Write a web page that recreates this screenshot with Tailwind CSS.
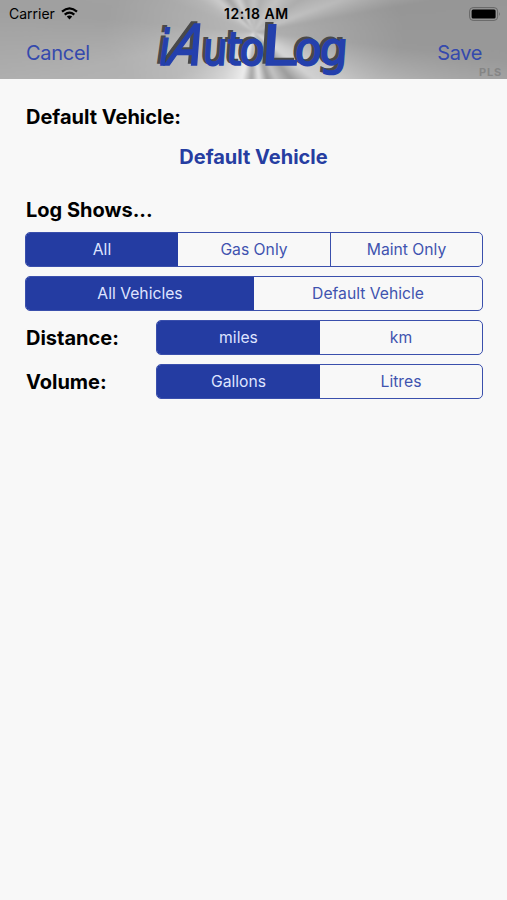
<!DOCTYPE html>
<html lang="en">
<head>
<meta charset="utf-8">
<title>iAutoLog</title>
<script src="https://cdn.jsdelivr.net/npm/@tailwindcss/browser@4"></script>
</head>
<body class="h-[900px] w-[507px] overflow-hidden bg-[#f8f8f8] font-['Inter','Liberation_Sans',sans-serif] text-black">
<header class="relative h-[79px] overflow-hidden bg-[#a3a3a3]">
  <div class="absolute -inset-[3px] bg-[radial-gradient(ellipse_150px_80px_at_257px_35px,#ffffff40,#ffffff00),conic-gradient(from_0deg_at_257px_35px,#b5b5b5_0deg,#a0a0a0_12deg,#b8b8b8_35deg,#a0a0a0_55deg,#b4b4b4_70deg,#969696_80deg,#999_96deg,#aaa_105deg,#c4c4c4_118deg,#cdcdcd_128deg,#909090_142deg,#bbb_155deg,#909090_164deg,#e2e2e2_174deg,#999_183deg,#eaeaea_194deg,#cfcfcf_215deg,#b5b5b5_240deg,#b0b0b0_258deg,#a0a0a0_275deg,#a2a2a2_290deg,#ababab_300deg,#c4c4c4_312deg,#939393_322deg,#c9c9c9_334deg,#a0a0a0_345deg,#b5b5b5_360deg)] blur-[1px]"></div>
  <svg class="absolute inset-0" width="507" height="79" font-family="'DejaVu Sans'">
    <defs>
      <g id="logo" font-size="46" stroke-width="1.6">
        <text transform="translate(157 65) skewX(-8) scale(.8 1)" font-size="49">i</text>
        <text transform="translate(164 65) skewX(-22) scale(.86 1)" font-size="56">A</text>
        <text transform="translate(202 65) skewX(-4) scale(.84 1)">u</text>
        <text transform="translate(226 65) skewX(-4) scale(.84 1)">t</text>
        <text transform="translate(239 65) skewX(-4) scale(.88 1)">o</text>
        <text transform="translate(260 65) skewX(-4) scale(1.18 1)" font-size="55">L</text>
        <text transform="translate(294 65) skewX(-4) scale(.96 1)">o</text>
        <text transform="translate(319 65) skewX(-4) scale(.96 1)">g</text>
      </g>
    </defs>
    <use href="#logo" x="-3" y="-2" fill="#494949" stroke="#494949"/>
    <use href="#logo" fill="#2440ad" stroke="#2440ad"/>
  </svg>
  <div class="relative flex h-[27px] items-center justify-between pr-[6px] pl-[9px]">
    <div class="flex items-center gap-[6px]"><span class="text-[14px] leading-[27px]">Carrier</span>
      <svg width="17" height="13" viewBox="0 0 17 13" fill="none" stroke="#000" stroke-width="2.2"><path d="M1 4.7Q8.500 -1.800 16 4.700M3.700 7.700Q8.500 3.500 13.300 7.700"/><path d="M5.800 9.600Q8.500 7.300 11.200 9.600L8.500 12.400Z" fill="#000" stroke="none"/></svg>
    </div>
    <span class="absolute left-[224px] text-[14px] font-semibold tracking-[.5px] whitespace-nowrap">12:18 AM</span>
    <svg width="32" height="14" viewBox="0 0 32 14"><rect x=".6" y=".6" width="28" height="12.800" rx="3.500" fill="none" stroke="#666"/><rect x="2.600" y="2.600" width="24" height="8.800" rx="1.500"/><path d="M30 5q1.800 2 0 4z" fill="#666"/></svg>
  </div>
  <div class="relative flex h-[51px] items-center justify-between px-[25px] text-[20px] text-[#3449ad]"><span class="pl-[1px] tracking-[-.3px]">Cancel</span><span class="tracking-[-.4px]">Save</span></div>
  <span class="absolute right-[5px] bottom-0 text-[11px] leading-[13px] font-bold tracking-[.8px] text-[#858585]">PLS</span>
</header>
<main class="px-[25px] text-[20px] font-bold">
  <h2 class="mt-[23px] h-[30px] pl-[1px] leading-[30px]">Default Vehicle:</h2>
  <div class="mt-[10px] h-[30px] text-center leading-[30px] text-[#263da1]">Default Vehicle</div>
  <h2 class="mt-[23px] h-[30px] pl-[1px] leading-[30px]">Log Shows...</h2>
  <div class="mt-[7px] flex h-[35px] w-[458px] overflow-hidden rounded-[5px] border border-[#3a4fac] text-[15.7px] font-normal text-[#4053af]">
    <div class="flex w-[152px] items-center justify-center bg-[#243ca2] pt-px text-[#dfe4ff]">All</div>
    <div class="flex w-[153px] items-center justify-center border-r border-[#3a4fac] pt-px">Gas Only</div>
    <div class="flex flex-1 items-center justify-center pt-px">Maint Only</div>
  </div>
  <div class="mt-[9px] flex h-[35px] w-[458px] overflow-hidden rounded-[5px] border border-[#3a4fac] text-[15.7px] font-normal text-[#4053af]">
    <div class="flex w-[228px] items-center justify-center bg-[#243ca2] pt-px text-[#dfe4ff]">All Vehicles</div>
    <div class="flex flex-1 items-center justify-center pt-px">Default Vehicle</div>
  </div>
  <div class="mt-[9px] flex h-[35px] w-[458px] items-center">
    <span class="w-[131px] pl-[1px]">Distance:</span>
    <div class="flex h-full flex-1 overflow-hidden rounded-[5px] border border-[#3a4fac] text-[15.7px] font-normal text-[#4053af]">
      <div class="flex w-[163px] items-center justify-center bg-[#243ca2] pt-px text-[#dfe4ff]">miles</div>
      <div class="flex flex-1 items-center justify-center pt-px">km</div>
    </div>
  </div>
  <div class="mt-[9px] flex h-[35px] w-[458px] items-center">
    <span class="w-[131px] pl-[1px]">Volume:</span>
    <div class="flex h-full flex-1 overflow-hidden rounded-[5px] border border-[#3a4fac] text-[15.7px] font-normal text-[#4053af]">
      <div class="flex w-[163px] items-center justify-center bg-[#243ca2] pt-px text-[#dfe4ff]">Gallons</div>
      <div class="flex flex-1 items-center justify-center pt-px">Litres</div>
    </div>
  </div>
</main>
</body>
</html>
